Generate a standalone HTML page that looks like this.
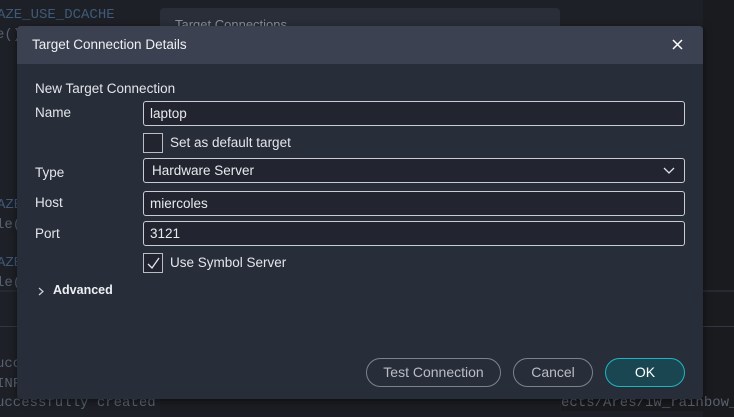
<!DOCTYPE html>
<html><head><style>
*{box-sizing:border-box;margin:0;padding:0}
body{width:734px;height:417px;overflow:hidden;background:#1e2027;position:relative;font-family:"Liberation Sans",sans-serif}
.mono{position:absolute;font-family:"Liberation Mono",monospace;font-size:14px;color:#59616e;white-space:pre}
.abs{position:absolute}
.lbl{position:absolute;left:35px;font-size:13.5px;color:#e4e6ea}
.inp{position:absolute;left:143px;width:542px;height:25px;border:1px solid #c9ccd2;border-radius:3px;background:#22252f;color:#e8eaee;font-size:13.5px;padding:4px 0 0 6px}
.cb{position:absolute;left:143px;width:20px;height:20px;border:1.5px solid #b9bcc3;background:#22252f}
.cbl{position:absolute;left:170px;font-size:13.5px;color:#e4e6ea}
.btn{position:absolute;top:358px;height:29px;border:1px solid #7d828b;border-radius:15px;color:#b9bdc4;font-size:14px;text-align:center;line-height:27px}
</style></head><body>
<div class="abs" style="left:703px;top:0;width:31px;height:417px;background:#1a1b1f"></div>
<div class="abs" style="left:0;top:290px;width:734px;height:2px;background:#262932"></div>
<div class="abs" style="left:0;top:326px;width:734px;height:1px;background:#333742"></div>
<div class="mono" style="left:-3px;top:7px;color:#3f5a78">AZE_USE_DCACHE</div>
<div class="mono" style="left:-4px;top:27px">e()</div>
<div class="mono" style="left:-3px;top:197px;color:#3f5a78">AZE</div>
<div class="mono" style="left:-4px;top:217px">le(</div>
<div class="mono" style="left:-3px;top:255px;color:#3f5a78">AZE</div>
<div class="mono" style="left:-4px;top:275px">le(</div>
<div class="mono" style="left:-4px;top:356px">ucc</div>
<div class="mono" style="left:-4px;top:376px">INF</div>
<div class="mono" style="left:-4px;top:395px">uccessfully created</div>
<div class="abs" style="left:160px;top:399px;width:400px;height:18px;background:#1b1d22"></div>
<div class="mono" style="left:561px;top:395px;background:#1a1b1f">ects/Ares/iw_rainbow_</div>
<div class="abs" style="left:160px;top:8px;width:400px;height:30px;background:#2a2e39;border-radius:4px"></div>
<div class="abs" style="left:175px;top:17px;font-size:13px;color:#8a8f99">Target Connections</div>
<div class="abs" style="left:17px;top:26px;width:686px;height:373px;background:#282d3a;border-radius:4px;box-shadow:0 2px 8px rgba(0,0,0,.5)"></div>
<div class="abs" style="left:17px;top:26px;width:686px;height:38px;background:#3b4150;border-radius:4px 4px 0 0"></div>
<div class="abs" style="left:32px;top:37px;font-size:13.5px;color:#eef0f3">Target Connection Details</div>
<svg class="abs" style="left:672px;top:39px" width="11" height="11"><path d="M1 1L10 10M10 1L1 10" stroke="#fff" stroke-width="1.5"/></svg>
<div class="lbl" style="top:81px">New Target Connection</div>
<div class="lbl" style="top:105px">Name</div>
<div class="inp" style="top:101px">laptop</div>
<div class="cb" style="top:133px"></div>
<div class="cbl" style="top:135px">Set as default target</div>
<div class="lbl" style="top:165px">Type</div>
<div class="inp" style="top:158px;padding-left:8px">Hardware Server</div>
<svg class="abs" style="left:663px;top:167px" width="12" height="8"><path d="M1 1L6 6L11 1" stroke="#dfe2e7" stroke-width="1.3" fill="none"/></svg>
<div class="lbl" style="top:195px">Host</div>
<div class="inp" style="top:191px">miercoles</div>
<div class="lbl" style="top:226px">Port</div>
<div class="inp" style="top:221px">3121</div>
<div class="cb" style="top:253px"></div>
<svg class="abs" style="left:146px;top:256px" width="15" height="15"><path d="M2 8L6 12L13 2" stroke="#e6e8ec" stroke-width="1.3" fill="none"/></svg>
<div class="cbl" style="top:255px">Use Symbol Server</div>
<svg class="abs" style="left:38px;top:287px" width="6" height="9"><path d="M1 1L5 4.5L1 8" stroke="#cfd2d8" stroke-width="1.2" fill="none"/></svg>
<div class="abs" style="left:53px;top:283px;font-size:12.5px;font-weight:bold;color:#eef0f3">Advanced</div>
<div class="btn" style="left:366px;width:135px">Test Connection</div>
<div class="btn" style="left:513px;width:80px">Cancel</div>
<div class="btn" style="left:605px;width:80px;border-color:#1fb5c0;background:#1a4651;color:#fff">OK</div>
</body></html>
